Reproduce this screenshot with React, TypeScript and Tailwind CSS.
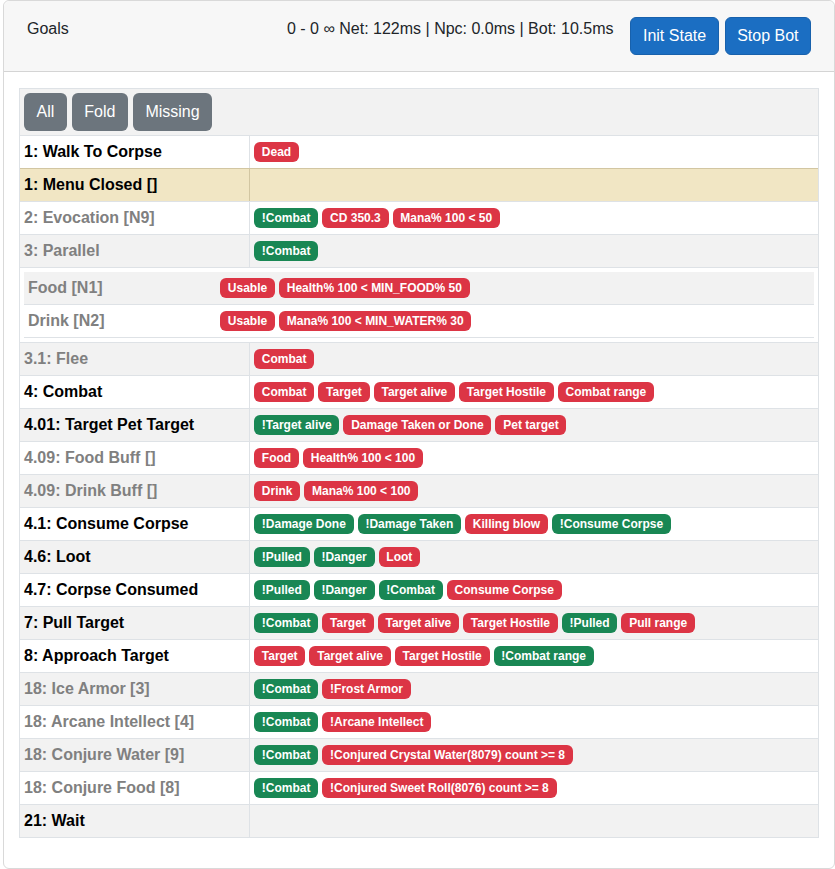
import React from "react";

type B = [string, "r" | "g"];
type Row = { title: string; muted?: boolean; warn?: boolean; badges: B[]; nested?: { title: string; badges: B[] }[] };

const rows: Row[] = [
  { title: "1: Walk To Corpse", badges: [["Dead", "r"]] },
  { title: "1: Menu Closed []", warn: true, badges: [] },
  { title: "2: Evocation [N9]", muted: true, badges: [["!Combat", "g"], ["CD 350.3", "r"], ["Mana% 100 < 50", "r"]] },
  {
    title: "3: Parallel",
    muted: true,
    badges: [["!Combat", "g"]],
    nested: [
      { title: "Food [N1]", badges: [["Usable", "r"], ["Health% 100 < MIN_FOOD% 50", "r"]] },
      { title: "Drink [N2]", badges: [["Usable", "r"], ["Mana% 100 < MIN_WATER% 30", "r"]] },
    ],
  },
  { title: "3.1: Flee", muted: true, badges: [["Combat", "r"]] },
  { title: "4: Combat", badges: [["Combat", "r"], ["Target", "r"], ["Target alive", "r"], ["Target Hostile", "r"], ["Combat range", "r"]] },
  { title: "4.01: Target Pet Target", badges: [["!Target alive", "g"], ["Damage Taken or Done", "r"], ["Pet target", "r"]] },
  { title: "4.09: Food Buff []", muted: true, badges: [["Food", "r"], ["Health% 100 < 100", "r"]] },
  { title: "4.09: Drink Buff []", muted: true, badges: [["Drink", "r"], ["Mana% 100 < 100", "r"]] },
  { title: "4.1: Consume Corpse", badges: [["!Damage Done", "g"], ["!Damage Taken", "g"], ["Killing blow", "r"], ["!Consume Corpse", "g"]] },
  { title: "4.6: Loot", badges: [["!Pulled", "g"], ["!Danger", "g"], ["Loot", "r"]] },
  { title: "4.7: Corpse Consumed", badges: [["!Pulled", "g"], ["!Danger", "g"], ["!Combat", "g"], ["Consume Corpse", "r"]] },
  { title: "7: Pull Target", badges: [["!Combat", "g"], ["Target", "r"], ["Target alive", "r"], ["Target Hostile", "r"], ["!Pulled", "g"], ["Pull range", "r"]] },
  { title: "8: Approach Target", badges: [["Target", "r"], ["Target alive", "r"], ["Target Hostile", "r"], ["!Combat range", "g"]] },
  { title: "18: Ice Armor [3]", muted: true, badges: [["!Combat", "g"], ["!Frost Armor", "r"]] },
  { title: "18: Arcane Intellect [4]", muted: true, badges: [["!Combat", "g"], ["!Arcane Intellect", "r"]] },
  { title: "18: Conjure Water [9]", muted: true, badges: [["!Combat", "g"], ["!Conjured Crystal Water(8079) count >= 8", "r"]] },
  { title: "18: Conjure Food [8]", muted: true, badges: [["!Combat", "g"], ["!Conjured Sweet Roll(8076) count >= 8", "r"]] },
  { title: "21: Wait", badges: [] },
];

function Badge({ b }: { b: B }) {
  return (
    <span
      className={
        "inline-block rounded-[6px] px-[7.8px] py-[4px] text-[12px] font-bold leading-none text-white whitespace-nowrap " +
        (b[1] === "g" ? "bg-[#198754]" : "bg-[#dc3545]")
      }
    >
      {b[0]}
    </span>
  );
}

function Badges({ list }: { list: B[] }) {
  return <div className="flex h-[24px] items-center gap-[4px]">{list.map((b, i) => <Badge key={i} b={b} />)}</div>;
}

export default function App() {
  let idx = 0;
  return (
    <div className="pl-[3px] bg-white" style={{ fontFamily: '"Liberation Sans", Arial, sans-serif' }}>
      <div className="w-[832px] h-[869px] rounded-[6px] border border-[#d9d9d9] bg-white text-[16px] leading-[24px] text-[#212529]">
        <div className="flex items-start justify-between border-b border-[#d4d4d4] bg-[#f7f7f7] px-[23px] pt-[16px] pb-[16px] rounded-t-[6px]">
          <div>Goals</div>
          <div className="flex items-start">
            <div>0 - 0 ∞ Net: 122ms | Npc: 0.0ms | Bot: 10.5ms</div>
            <div className="ml-[17px] flex gap-[6px]">
              <button className="h-[38px] rounded-[6px] border border-[#1861ac] bg-[#1b6ec2] px-[11.5px] text-white">Init State</button>
              <button className="h-[38px] rounded-[6px] border border-[#1861ac] bg-[#1b6ec2] px-[11.5px] text-white">Stop Bot</button>
            </div>
          </div>
        </div>
        <div className="px-[15px] pt-[16px]">
          <div className="border-x border-b border-[#dee2e6]">
            <div className="flex gap-[5px] border-t border-[#dee2e6] bg-[#f2f2f2] p-[4px]">
              <button className="h-[38px] rounded-[6px] bg-[#6c757d] px-[12.5px] text-white">All</button>
              <button className="h-[38px] rounded-[6px] bg-[#6c757d] px-[12.5px] text-white">Fold</button>
              <button className="h-[38px] rounded-[6px] bg-[#6c757d] px-[12.5px] text-white">Missing</button>
            </div>
            {rows.map((r, i) => {
              const striped = idx % 2 === 1;
              idx++;
              const bg = r.warn ? "bg-[#f1e6c4]" : striped ? "bg-[#f2f2f2]" : "bg-white";
              const bc = r.warn ? "border-[#d2c6a2]" : "border-[#dee2e6]";
              const tc = r.muted ? "text-[#808080]" : "text-black";
              if (r.nested) idx++;
              return (
                <React.Fragment key={i}>
                  <div className={"flex border-t " + bc + " " + bg}>
                    <div className={"w-[230px] shrink-0 border-r p-[4px] font-bold " + bc + " " + tc}>{r.title}</div>
                    <div className="flex-1 p-[4px]">
                      <Badges list={r.badges} />
                    </div>
                  </div>
                  {r.nested && (
                    <div className="border-t border-[#dee2e6] bg-white p-[4px]">
                      {r.nested.map((n, j) => (
                        <div key={j} className={"flex border-b border-[#dee2e6] " + (j % 2 === 0 ? "bg-[#f2f2f2]" : "bg-white")}>
                          <div className="w-[192px] shrink-0 p-[4px] font-bold text-[#808080]">{n.title}</div>
                          <div className="flex-1 p-[4px]">
                            <Badges list={n.badges} />
                          </div>
                        </div>
                      ))}
                    </div>
                  )}
                </React.Fragment>
              );
            })}
          </div>
        </div>
      </div>
    </div>
  );
}
